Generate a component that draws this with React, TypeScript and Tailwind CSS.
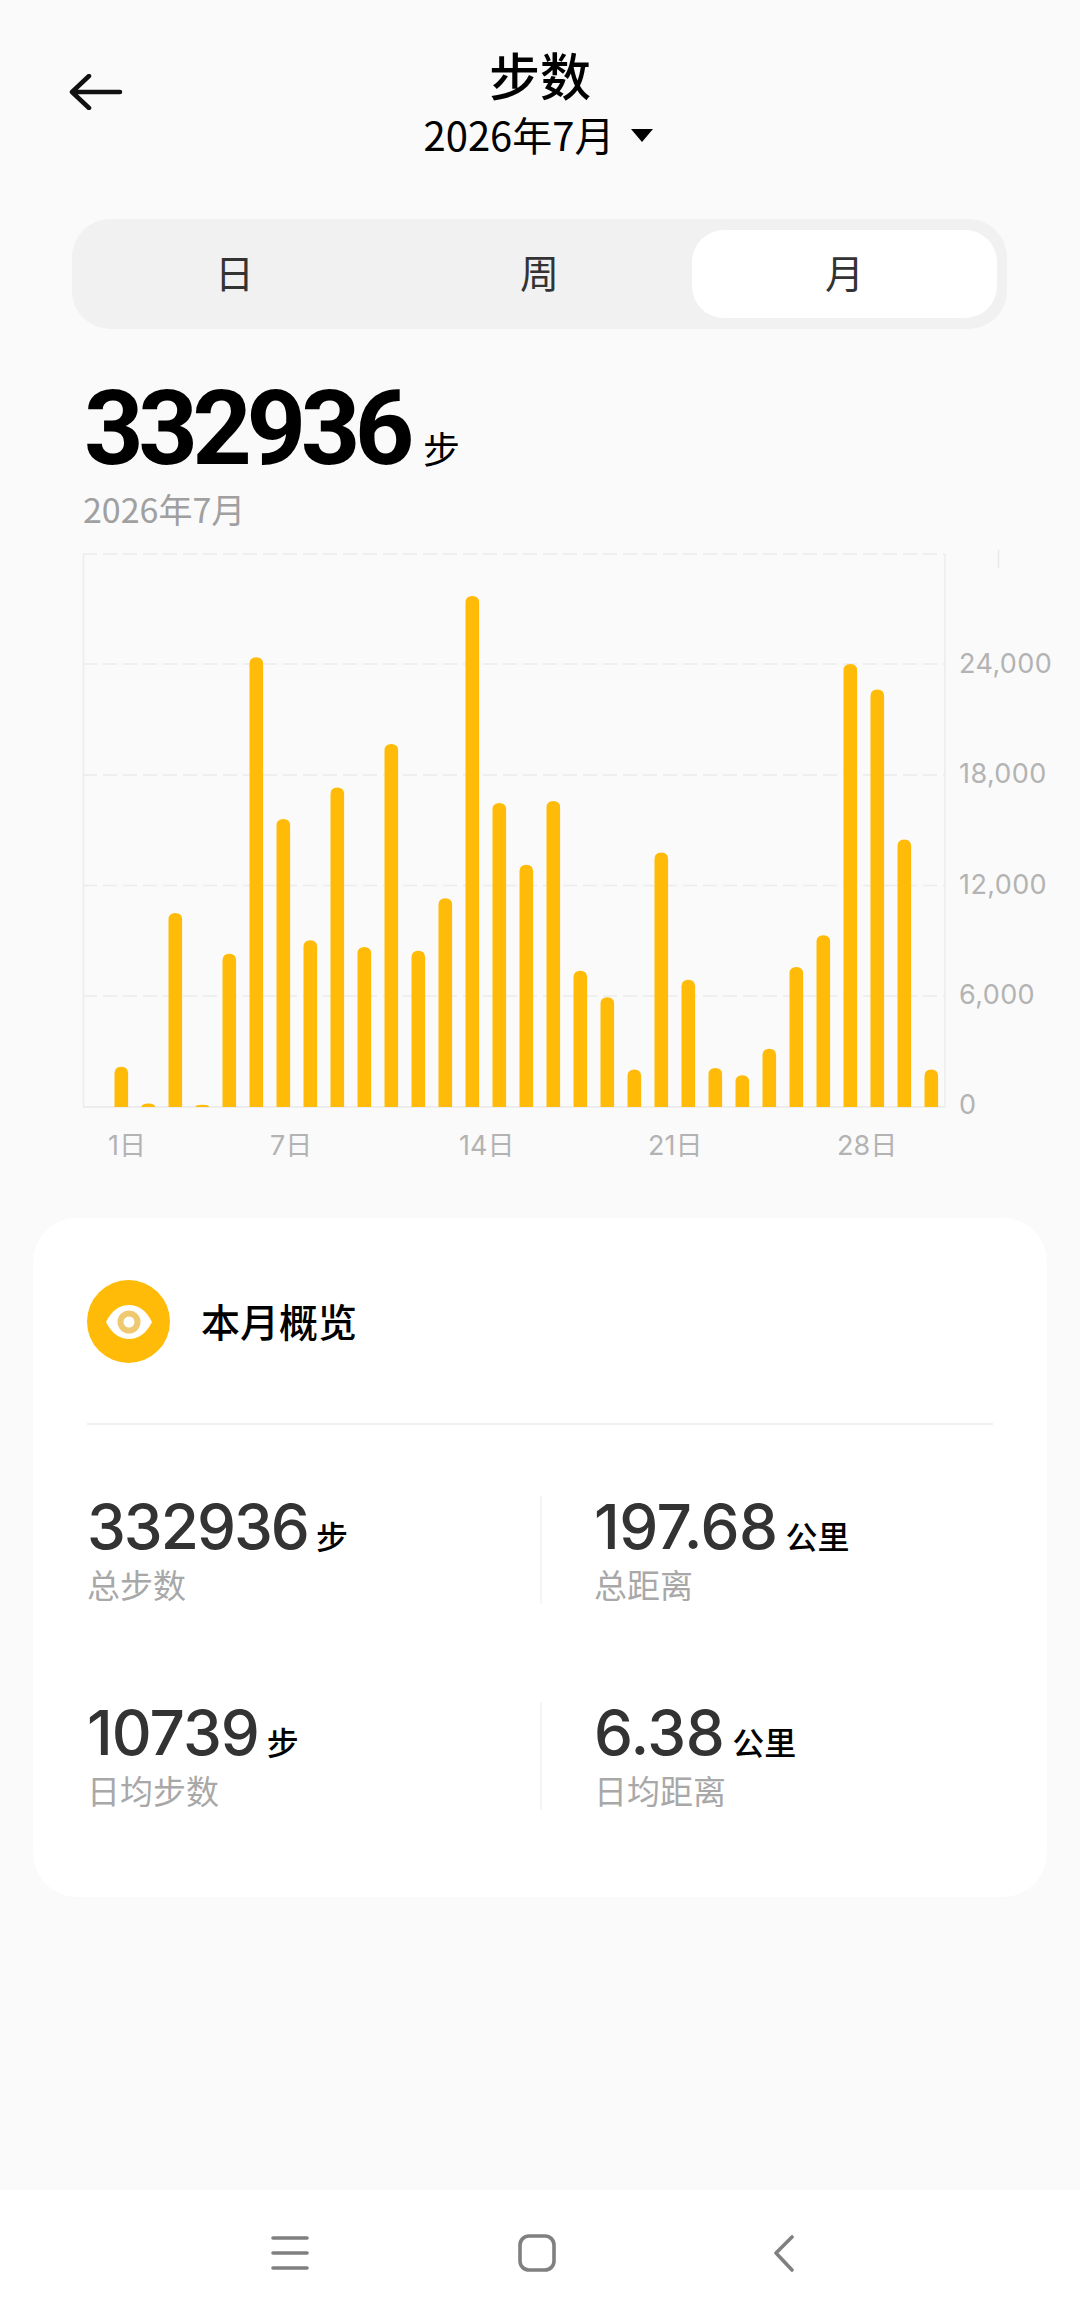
const barTops = [
  1066.7, 1103.5, 912.9, 1104.7, 953.7, 657.3, 819, 940.2, 787.6, 947.1, 743.9,
  950.8, 898.2, 596.1, 803.1, 864.7, 801, 970.8, 997.3, 1069.6, 852.4, 979.8,
  1068, 1075.3, 1048.8, 967.1, 935.3, 663.9, 689.6, 839.4, 1069.6,
];

const CHART_TOP = 540;
const BASELINE = 1107 - CHART_TOP;

const gridLines = [554, 664, 775, 885.5, 996].map((y) => y - CHART_TOP);

const yLabels = [
  { text: '24,000', y: 663 },
  { text: '18,000', y: 773 },
  { text: '12,000', y: 884 },
  { text: '6,000', y: 994 },
  { text: '0', y: 1104 },
];

const xLabels = [
  { text: '1日', x: 108 },
  { text: '7日', x: 270 },
  { text: '14日', x: 459 },
  { text: '21日', x: 648 },
  { text: '28日', x: 837 },
];

const barPath = (cx: number, top: number) => {
  const y = top - CHART_TOP;
  const h = BASELINE - y;
  const r = Math.min(6.5, h);
  const l = cx - 6.8;
  const R = cx + 6.8;
  return `M${l} ${BASELINE}V${y + r}Q${l} ${y} ${cx} ${y}Q${R} ${y} ${R} ${y + r}V${BASELINE}Z`;
};

const StepChart = () => (
  <svg width="1080" height="630" className="block" style={{ fontFamily: 'Inter, "Noto Sans CJK SC", sans-serif' }}>
    {gridLines.map((y) => (
      <line key={y} x1="83" x2="945" y1={y} y2={y} stroke="#ececec" strokeWidth="1.5" strokeDasharray="14 6" />
    ))}
    <line x1="83" x2="945" y1={BASELINE} y2={BASELINE} stroke="#e9e9e9" strokeWidth="1.5" />
    <line x1="83.5" x2="83.5" y1="14" y2={BASELINE} stroke="#ececec" strokeWidth="1.5" />
    <line x1="945" x2="945" y1="14" y2={BASELINE} stroke="#ececec" strokeWidth="1.5" />
    {barTops.map((top, i) => (
      <path key={i} d={barPath(121.3 + i * 27, top)} fill="#ffbb07" />
    ))}
    {yLabels.map((l) => (
      <text key={l.text} x="959" y={l.y - CHART_TOP + 10} fontSize="27" letterSpacing="0.4" fill="#b3b3b3">
        {l.text}
      </text>
    ))}
    {xLabels.map((l) => (
      <text key={l.text} x={l.x} y="615" fontSize="27" fill="#b3b3b3">
        {l.text}
      </text>
    ))}
    <path d="M998.5 10V28" stroke="#e8e8e8" strokeWidth="1.5" fill="none" />
  </svg>
);

const Stat = ({
  value,
  unit,
  label,
  right,
  tracking,
}: {
  value: string;
  unit: string;
  label: string;
  right?: boolean;
  tracking: string;
}) => (
  <div className={right ? 'border-l-2 border-[#f5f5f5] pl-[52px]' : ''}>
    <div className="flex items-baseline h-[62px]">
      <span className={`text-[62px] leading-[62px] font-medium text-[#333333] [font-family:Inter,sans-serif] ${tracking}`}>
        {value}
      </span>
      <span className="ml-[8px] text-[32px] font-medium text-black">{unit}</span>
    </div>
    <p className="mt-[6px] text-[33px] leading-[40px] text-[#a8a8a8]">{label}</p>
  </div>
);

const App = () => {
  return (
    <div className="flex flex-col h-[2321px] bg-[#fafafa] [font-family:'Noto_Sans_CJK_SC',sans-serif]">
      <main className="flex-1">
        {/* Header Start */}
        <header className="grid grid-cols-[1fr_auto_1fr] pt-[44px]">
          <button className="pl-[69px] pt-[30px] self-start" aria-label="Back">
            <svg width="54" height="36" viewBox="0 0 54 36" fill="none" stroke="#111111" strokeWidth="4.5" strokeLinecap="round" strokeLinejoin="round">
              <path d="M51 18H3M20 2 3 18l17 16" />
            </svg>
          </button>
          <div className="flex flex-col items-center">
            <h1 className="text-[51px] leading-[60px] font-medium text-black">步数</h1>
            <div className="flex items-center gap-[16px] mt-[5px] pr-[4px] text-[40px] leading-[50px] text-black">
              2026年7月
              <span className="mt-[3px] w-0 h-0 border-x-[11px] border-x-transparent border-t-[13px] border-t-black" />
            </div>
          </div>
          <div />
        </header>
        {/* Header End */}

        {/* Tabs Start */}
        <nav className="grid grid-cols-3 mt-[60px] ml-[72px] w-[935px] h-[110px] px-[10px] py-[11px] rounded-[38px] bg-[#f1f1f1]">
          <div className="flex items-center justify-center pb-[6px] text-[39px] text-[#333333]">日</div>
          <div className="flex items-center justify-center pb-[6px] text-[39px] text-[#333333]">周</div>
          <div className="flex items-center justify-center pb-[6px] text-[39px] text-[#333333] bg-white rounded-[32px]">月</div>
        </nav>
        {/* Tabs End */}

        {/* Summary Start */}
        <section className="pl-[84px] mt-[50px] pb-[9px]">
          <div className="flex items-baseline h-[100px]">
            <span className="text-[104px] leading-[100px] font-bold tracking-[-5.5px] text-black [font-family:Roboto,sans-serif]">
              332936
            </span>
            <span className="ml-[14px] text-[37px] text-black">步</span>
          </div>
          <p className="mt-[8px] -ml-[1px] text-[34px] leading-[44px] text-[#a0a0a0]">2026年7月</p>
        </section>
        {/* Summary End */}

        <StepChart />

        {/* Overview Card Start */}
        <section className="mx-[33px] mt-[48px] h-[679px] rounded-[44px] bg-white px-[54px]">
          <div className="flex items-center gap-[31px] pt-[62px] pb-[60px] border-b-2 border-[#efefef]">
            <div className="flex items-center justify-center w-[83px] h-[83px] rounded-full bg-[#ffbb07]">
              <svg width="48" height="34" viewBox="0 0 48 34">
                <path d="M1 17C7 5 15 0 24 0s17 5 23 17c-6 12-14 17-23 17S7 29 1 17Z" fill="#ffffff" />
                <circle cx="24" cy="17" r="11.5" fill="#efc970" />
                <circle cx="24" cy="17" r="5.5" fill="#ffffff" />
              </svg>
            </div>
            <h2 className="-mt-[3px] text-[39px] leading-[48px] font-medium text-black">本月概览</h2>
          </div>
          <div className="grid grid-cols-2 gap-y-[98px] mt-[71px]">
            <Stat value="332936" unit="步" label="总步数" tracking="tracking-[-2px]" />
            <Stat value="197.68" unit="公里" label="总距离" tracking="tracking-[-0.5px]" right />
            <Stat value="10739" unit="步" label="日均步数" tracking="tracking-[-1px]" />
            <Stat value="6.38" unit="公里" label="日均距离" tracking="tracking-[-0.5px]" right />
          </div>
        </section>
        {/* Overview Card End */}
      </main>

      {/* Nav Bar */}
      <footer className="flex items-center h-[131px] bg-white pl-[271px] pb-[6px]">
        <svg width="38" height="34" viewBox="0 0 38 34" stroke="#808080" strokeWidth="3.6" strokeLinecap="round">
          <path d="M2 2h34M2 17h34M2 32h34" />
        </svg>
        <svg className="ml-[209px]" width="38" height="38" viewBox="0 0 38 38" fill="none" stroke="#808080" strokeWidth="3.6">
          <rect x="2" y="2" width="34" height="34" rx="9" />
        </svg>
        <svg className="ml-[217px]" width="22" height="38" viewBox="0 0 22 38" fill="none" stroke="#808080" strokeWidth="3.6" strokeLinecap="round" strokeLinejoin="round">
          <path d="M19 3 3 19l16 17" />
        </svg>
      </footer>
    </div>
  );
};

export default App;
